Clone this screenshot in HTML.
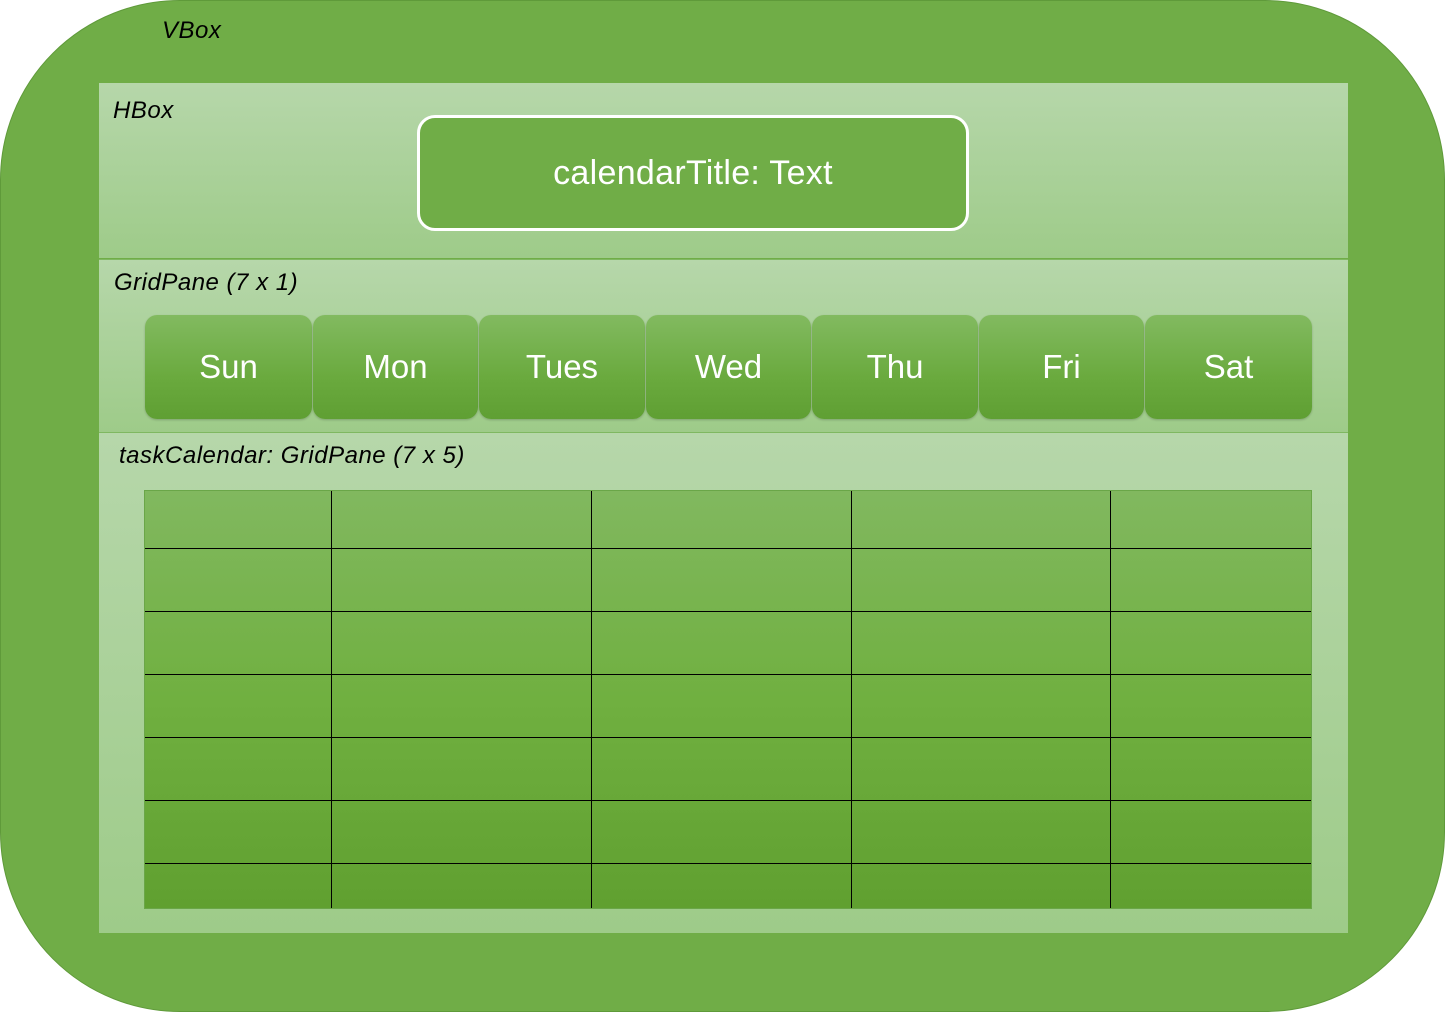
<!DOCTYPE html>
<html><head><style>
body{margin:0;width:1445px;height:1012px;background:#fff;position:relative;overflow:hidden;font-family:"Liberation Sans",sans-serif}
.outer{position:absolute;left:0;top:0;width:1443px;height:1010px;border:1px solid #5f9a3a;border-radius:180px;background:#70ad47}
.lbl{position:absolute;font-style:italic;font-size:24px;color:#000;letter-spacing:0.5px}
.panel{position:absolute;left:99px;width:1249px;background:linear-gradient(#b6d7aa,#9ecb89)}
.title{position:absolute;left:417px;top:115px;width:546px;height:110px;border:3px solid #fff;border-radius:18px;background:#70ad47;color:#fff;font-size:34px;font-family:"Liberation Sans",sans-serif;display:flex;align-items:center;justify-content:center;letter-spacing:0.3px}
.day{position:absolute;top:315px;height:104px;border-radius:12px;background:linear-gradient(#82ba60,#6aaa3e 60%,#5f9f33);color:#fff;font-size:33px;font-family:"Liberation Sans",sans-serif;display:flex;align-items:center;justify-content:center;box-shadow:0 1px 2px rgba(0,0,0,.2)}
.grid{position:absolute;left:145px;top:491px;width:1166px;height:417px;background:linear-gradient(#81b85f,#70b040 50%,#60a030);box-shadow:0 0 0 1px #6aa648}
.v{position:absolute;top:0;width:1px;height:417px;background:#000}
.h{position:absolute;left:0;width:1166px;height:1px;background:#000}
</style></head><body>
<div class="outer"></div>
<div class="lbl" style="left:162px;top:17px">VBox</div>
<div class="panel" style="top:83px;height:175px"></div>
<div class="panel" style="top:259px;height:172px;border-top:1px solid #7fb861"></div>
<div class="panel" style="top:432px;height:500px;border-top:1px solid #7fb861"></div>
<div class="lbl" style="left:113px;top:97px">HBox</div>
<div class="title">calendarTitle: Text</div>
<div class="lbl" style="left:114px;top:269px">GridPane (7 x 1)</div>
<div class="day" style="left:145px;width:167px">Sun</div>
<div class="day" style="left:313px;width:165px">Mon</div>
<div class="day" style="left:479px;width:166px">Tues</div>
<div class="day" style="left:646px;width:165px">Wed</div>
<div class="day" style="left:812px;width:166px">Thu</div>
<div class="day" style="left:979px;width:165px">Fri</div>
<div class="day" style="left:1145px;width:167px">Sat</div>
<div class="lbl" style="left:119px;top:442px">taskCalendar: GridPane (7 x 5)</div>
<div class="grid">
<div class="v" style="left:186px"></div><div class="v" style="left:446px"></div><div class="v" style="left:706px"></div><div class="v" style="left:965px"></div>
<div class="h" style="top:57px"></div><div class="h" style="top:120px"></div><div class="h" style="top:183px"></div><div class="h" style="top:246px"></div><div class="h" style="top:309px"></div><div class="h" style="top:372px"></div>
</div>
</body></html>
